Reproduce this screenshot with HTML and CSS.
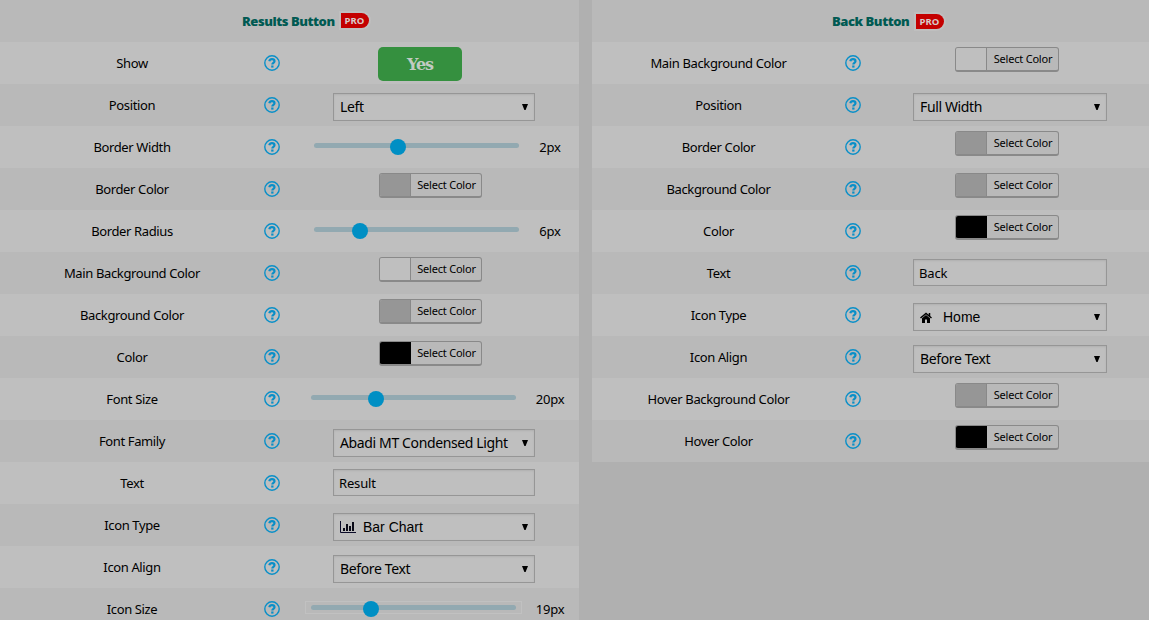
FILE: index.html
```html
<!DOCTYPE html>
<html lang="en">
<head>
<meta charset="utf-8">
<title>Button settings</title>
<link rel="stylesheet" href="styles.css">
</head>
<body>
<svg class="defs" width="0" height="0">
  <symbol id="help" viewBox="0 0 16 16">
    <circle cx="8" cy="8" r="7.200" fill="none" stroke="currentColor" stroke-width="1.400"/>
    <path d="M5.300 6.300C5.600 4.800 6.600 4.200 8 4.200c1.500 0 2.500.8 2.500 2 0 1.600-2.200 1.700-2.200 3.300" fill="none" stroke="currentColor" stroke-width="2.200"/>
    <rect x="7.200" y="10.500" width="2.300" height="2.100" fill="currentColor"/>
  </symbol>
  <symbol id="arrow" viewBox="0 0 6 6"><path d="M0 0h6L3.600 6H2.400z" fill="#000"/></symbol>
</svg>
<main class="page">
  <section class="panel results">
    <header class="row head"><h2>Results Button</h2><span class="pro">PRO</span></header>
    <div class="row"><span class="label">Show</span><svg class="help"><use href="#help"/></svg><span class="toggle">Yes</span></div>
    <div class="row"><span class="label">Position</span><svg class="help"><use href="#help"/></svg><div class="select"><span>Left</span><svg class="arrow"><use href="#arrow"/></svg></div></div>
    <div class="row"><span class="label">Border Width</span><svg class="help"><use href="#help"/></svg><div class="range"><div class="track"><i class="thumb" style="left:76px"></i></div><span class="value">2px</span></div></div>
    <div class="row"><span class="label">Border Color</span><svg class="help"><use href="#help"/></svg><div class="picker"><i class="swatch gray"></i><span>Select Color</span></div></div>
    <div class="row"><span class="label">Border Radius</span><svg class="help"><use href="#help"/></svg><div class="range"><div class="track"><i class="thumb" style="left:38px"></i></div><span class="value">6px</span></div></div>
    <div class="row"><span class="label">Main Background Color</span><svg class="help"><use href="#help"/></svg><div class="picker"><i class="swatch white"></i><span>Select Color</span></div></div>
    <div class="row"><span class="label">Background Color</span><svg class="help"><use href="#help"/></svg><div class="picker"><i class="swatch gray"></i><span>Select Color</span></div></div>
    <div class="row"><span class="label">Color</span><svg class="help"><use href="#help"/></svg><div class="picker"><i class="swatch black"></i><span>Select Color</span></div></div>
    <div class="row"><span class="label">Font Size</span><svg class="help"><use href="#help"/></svg><div class="range wide"><div class="track"><i class="thumb" style="left:57px"></i></div><span class="value">20px</span></div></div>
    <div class="row"><span class="label">Font Family</span><svg class="help"><use href="#help"/></svg><div class="select"><span>Abadi MT Condensed Light</span><svg class="arrow"><use href="#arrow"/></svg></div></div>
    <div class="row"><span class="label">Text</span><svg class="help"><use href="#help"/></svg><div class="input">Result</div></div>
    <div class="row"><span class="label">Icon Type</span><svg class="help"><use href="#help"/></svg><div class="select glyph"><svg class="chart" viewBox="0 0 16 12"><path d="M.5 0v11.500H16" fill="none" stroke="#0b0b28"/><path d="M3 7h2v3H3zM6 3h2v7H6zM9 5h2v5H9zM12 1h2v9h-2z" fill="#0b0b18"/></svg><span>Bar Chart</span><svg class="arrow"><use href="#arrow"/></svg></div></div>
    <div class="row"><span class="label">Icon Align</span><svg class="help"><use href="#help"/></svg><div class="select"><span>Before Text</span><svg class="arrow"><use href="#arrow"/></svg></div></div>
    <div class="row"><span class="label">Icon Size</span><svg class="help"><use href="#help"/></svg><div class="range wide"><div class="track focus"><i class="thumb" style="left:52px"></i></div><span class="value">19px</span></div></div>
  </section>
  <section class="panel back">
    <header class="row head"><h2>Back Button</h2><span class="pro">PRO</span></header>
    <div class="row"><span class="label">Main Background Color</span><svg class="help"><use href="#help"/></svg><div class="picker"><i class="swatch white"></i><span>Select Color</span></div></div>
    <div class="row"><span class="label">Position</span><svg class="help"><use href="#help"/></svg><div class="select"><span>Full Width</span><svg class="arrow"><use href="#arrow"/></svg></div></div>
    <div class="row"><span class="label">Border Color</span><svg class="help"><use href="#help"/></svg><div class="picker"><i class="swatch gray"></i><span>Select Color</span></div></div>
    <div class="row"><span class="label">Background Color</span><svg class="help"><use href="#help"/></svg><div class="picker"><i class="swatch gray"></i><span>Select Color</span></div></div>
    <div class="row"><span class="label">Color</span><svg class="help"><use href="#help"/></svg><div class="picker"><i class="swatch black"></i><span>Select Color</span></div></div>
    <div class="row"><span class="label">Text</span><svg class="help"><use href="#help"/></svg><div class="input">Back</div></div>
    <div class="row"><span class="label">Icon Type</span><svg class="help"><use href="#help"/></svg><div class="select glyph"><svg class="home" viewBox="0 0 12 11"><path d="M.5 6L6 1.400 11.500 6M9.500 1v3" fill="none" stroke="#000" stroke-width="1.500"/><path d="M2 6.300l4-3.300 4 3.300V11H7V7.500H5V11H2z"/></svg><span>Home</span><svg class="arrow"><use href="#arrow"/></svg></div></div>
    <div class="row"><span class="label">Icon Align</span><svg class="help"><use href="#help"/></svg><div class="select"><span>Before Text</span><svg class="arrow"><use href="#arrow"/></svg></div></div>
    <div class="row"><span class="label">Hover Background Color</span><svg class="help"><use href="#help"/></svg><div class="picker"><i class="swatch gray"></i><span>Select Color</span></div></div>
    <div class="row"><span class="label">Hover Color</span><svg class="help"><use href="#help"/></svg><div class="picker"><i class="swatch black"></i><span>Select Color</span></div></div>
  </section>
</main>
</body>
</html>
```

FILE: styles.css
```css
* { box-sizing: border-box; }
body { margin: 0; height: 620px; overflow: hidden; background: #b0b0b0; color: #000; font: 13px/18px "Noto Sans", "Open Sans", sans-serif; }
.defs { display: block; }
.page { display: flex; gap: 13px; align-items: flex-start; }
.results { width: 579px; }
.back { width: 557px; }
.row { display: grid; grid-template-columns: 264px 16px 1fr; align-items: start; height: 42px; background: #b9b9b9; }
.back .row { grid-template-columns: 253px 16px 1fr; }
.row:nth-child(even) { background: #bfbfbf; }
.panel .head { display: flex; padding: 13px 0 0 242px; gap: 5px; }
.back.panel .head { padding-left: 240px; gap: 6px; }
h2 { margin: -1px 0 0; width: 94px; font: 800 13px/18px "Open Sans", "Noto Sans", sans-serif; color: #005a52; white-space: nowrap; letter-spacing: -0.45px; }
.back h2 { width: 78px; }
.pro { width: 28px; height: 15px; border-radius: 0 8px 8px 0; background: #c40000; box-shadow: 0 0 0 2px #bfbfbf; color: #d8cccc; font: 700 9.5px/15px "Open Sans", sans-serif; text-align: center; padding-right: 1px; }
.back .pro { margin-top: 1px; }
.label { margin-top: 12px; text-align: center; letter-spacing: -0.37px; white-space: nowrap; }
.help { width: 16px; height: 16px; margin-top: 12.5px; color: #098fc8; }
.toggle { margin: 5px 0 0 98px; width: 84px; height: 34px; border-radius: 5px; background: #35903f; color: #c2cbc2; font: 700 16px/36px "DejaVu Serif", serif; letter-spacing: -1px; text-align: center; }
.select, .input { display: flex; align-items: center; margin-left: 53px; width: 202px; border: 1px solid #969696; background: #bfbfbf; box-shadow: inset 0 1px 2px rgba(0,0,0,.08); white-space: nowrap; }
.back .select, .back .input { margin-left: 52px; width: 194px; }
.select { margin-top: 9px; height: 28px; padding: 0 6px; font-size: 14px; letter-spacing: -0.37px; }
.input { margin-top: 7px; height: 27px; padding: 0 5px; font-size: 13px; letter-spacing: -0.15px; }
.glyph { font-family: "Liberation Sans", sans-serif; letter-spacing: 0; }
.arrow { width: 6px; height: 6px; margin-left: auto; }
.chart { width: 16px; height: 12px; margin-right: 7px; }
.home { width: 12px; height: 11px; margin-right: 11px; }
.picker { display: flex; margin: 5px 0 0 99px; width: 103px; height: 25px; border: 1px solid #898989; border-bottom-width: 2px; border-radius: 3px; background: #b9b9b9; overflow: hidden; font-size: 11px; line-height: 22px; letter-spacing: -0.2px; white-space: nowrap; }
.back .picker { margin-left: 94px; width: 104px; }
.picker span { flex: 1; text-align: center; padding-left: 1px; }
.swatch { width: 31px; border-right: 1px solid #898989; }
.gray { background: #969696; }
.white { background: #bfbfbf; }
.black { background: #000; border-right-color: #000; }
.range { display: grid; grid-template-columns: 205px 1fr; margin-left: 34px; }
.range.wide { margin-left: 31px; }
.track { position: relative; height: 5px; margin-top: 17px; border-radius: 3px; background: #92a9b1; }
.focus::before { content: ""; position: absolute; inset: -4px -6px; border: 1px solid #c1c1c1; }
.thumb { position: absolute; top: -4px; width: 16px; height: 16px; border-radius: 50%; background: #008fc4; }
.value { margin: 12px 0 0 11px; width: 40px; text-align: center; letter-spacing: -0.2px; }
.wide .value { margin-left: 14px; }
```
